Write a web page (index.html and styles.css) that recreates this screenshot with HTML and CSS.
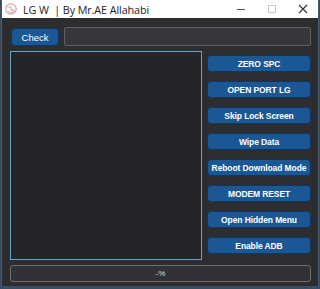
FILE: index.html
```html
<!DOCTYPE html>
<html lang="en">
<head>
    <meta charset="UTF-8">
    <title>LG W</title>
    <link rel="stylesheet" href="styles.css">
</head>
<body>
    <div class="window">
        <div class="titlebar">
            <svg class="logo" width="12" height="12" viewBox="0 0 12 12">
                <circle cx="6" cy="6" r="5.2" fill="none" stroke="#d9a1a8" stroke-width="1.2"/>
                <circle cx="4.2" cy="4.2" r="0.8" fill="#d9a1a8"/>
                <path d="M6 3 V7.2 H7.8 M6.2 7.2 H9.4 A3.4 3.4 0 0 1 3 8" fill="none" stroke="#d9a1a8" stroke-width="1"/>
            </svg>
            <span class="title">LG W&nbsp; | By Mr.AE Allahabi</span>
            <div class="controls">
                <span class="ctl"><svg width="10" height="10" viewBox="0 0 10 10"><path d="M1 5.5 H9" stroke="#555" stroke-width="1"/></svg></span>
                <span class="ctl"><svg width="10" height="10" viewBox="0 0 10 10"><rect x="1.5" y="1.5" width="7" height="7" fill="none" stroke="#c8c8c8" stroke-width="1"/></svg></span>
                <span class="ctl"><svg width="10" height="10" viewBox="0 0 10 10"><path d="M1 1 L9 9 M9 1 L1 9" stroke="#333" stroke-width="1.1"/></svg></span>
            </div>
        </div>
        <div class="content">
            <div class="toprow">
                <div class="btn check">Check</div>
                <div class="field"></div>
            </div>
            <div class="mainrow">
                <div class="log"></div>
                <div class="actions">
                    <div class="btn">ZERO SPC</div>
                    <div class="btn">OPEN PORT LG</div>
                    <div class="btn">Skip Lock Screen</div>
                    <div class="btn">Wipe Data</div>
                    <div class="btn">Reboot Download Mode</div>
                    <div class="btn">MODEM RESET</div>
                    <div class="btn">Open Hidden Menu</div>
                    <div class="btn">Enable ADB</div>
                </div>
            </div>
            <div class="progress">-%</div>
        </div>
    </div>
</body>
</html>
```

FILE: styles.css
```css
*{margin: 0; padding: 0; box-sizing: border-box;}
body{
    width: 320px;
    height: 289px;
    background: #3a4c60;
    font-family: "Liberation Sans", Arial, sans-serif;
    overflow: hidden;
}
.window{
    width: 318px;
    height: 286px;
    margin-left: 1px;
    border-left: 1px solid #44586e;
    border-right: 1px solid #44586e;
    background: #2d2d30;
    display: flex;
    flex-direction: column;
}
.titlebar{
    height: 18px;
    background: #fff;
    display: flex;
    align-items: center;
    padding-left: 3px;
}
.logo{
    margin-right: 6px;
}
.title{
    font-family: "Open Sans", "Noto Sans", sans-serif;
    font-size: 10.8px;
    color: #222;
    letter-spacing: -0.1px;
}
.controls{
    margin-left: auto;
    display: flex;
}
.ctl{
    width: 31px;
    height: 18px;
    display: flex;
    align-items: center;
    justify-content: center;
}
.content{
    flex: 1;
    padding: 9px 7px 0 8px;
    display: flex;
    flex-direction: column;
}
.toprow{
    display: flex;
    gap: 5px;
    height: 19px;
}
.btn{
    background: #1b5794;
    border: 1px solid #0d3866;
    border-radius: 4px;
    color: #fff;
    font-size: 8.5px;
    font-weight: bold;
    height: 17px;
    display: flex;
    align-items: center;
    justify-content: center;
    white-space: nowrap;
    letter-spacing: -0.1px;
}
.check{
    width: 48px;
    height: 18px;
    margin: 1px 0 0 1px;
    font-weight: normal;
    font-size: 9.5px;
    letter-spacing: 0;
}
.field{
    flex: 1;
    background: #37373a;
    border: 1px solid #606063;
    border-radius: 2px;
}
.mainrow{
    display: flex;
    gap: 5px;
    margin-top: 5px;
    height: 209px;
}
.log{
    width: 192px;
    background: #252527;
    border: 1px solid #64a4cc;
}
.actions{
    flex: 1;
    display: flex;
    flex-direction: column;
    gap: 9px;
    padding-top: 4px;
}
.progress{
    margin-top: 5px;
    height: 17px;
    background: #323235;
    border: 1px solid #6e6e70;
    border-radius: 3px;
    color: #ddd;
    font-size: 8px;
    display: flex;
    align-items: center;
    justify-content: center;
}
```
